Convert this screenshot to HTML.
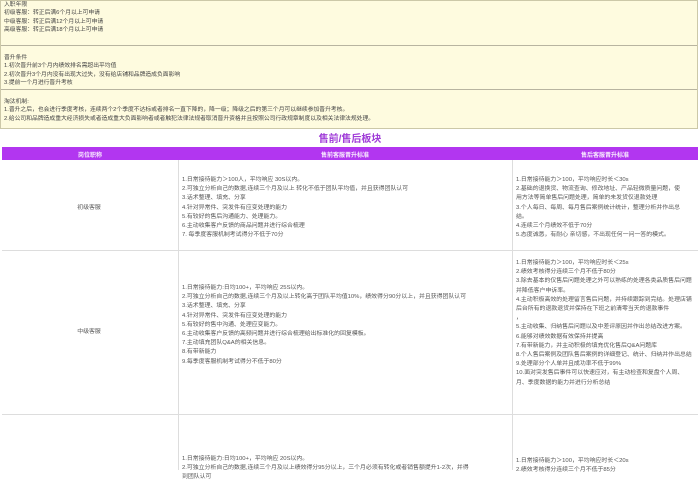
<!DOCTYPE html><html><head><meta charset="utf-8"><style>
body{margin:0;width:700px;height:470px;overflow:hidden;background:#fff;font-family:"Liberation Sans","Noto Sans CJK SC",sans-serif;color:#444;}
.box{position:absolute;left:0;top:0;width:696px;height:127px;background:#fefbdf;border:1px solid #ccc8a8;font-size:5.8px;line-height:8.4px;}
.sec{padding:0 3px;border-bottom:1px solid #b8b4a0;box-sizing:border-box;}
.t{position:absolute;top:130px;left:0;width:700px;text-align:center;color:#a03cd8;font-size:10px;font-weight:bold}
.hd{position:absolute;top:147px;left:2px;width:696px;height:13px;background:#b236f0;color:#f8e8ff;font-size:6px;font-weight:bold}
.hd div{position:absolute;top:3px;text-align:center}
.cell{position:absolute;font-size:5.9px;line-height:9.2px;color:#555}
.v{position:absolute;width:1px;background:#ddd}
.h{position:absolute;height:1px;background:#ddd;left:2px;width:696px}
</style></head><body>
<div class="box">
<div class="sec" style="height:45px">入职年限<br>初级客服：转正后满6个月以上可申请<br>中级客服：转正后满12个月以上可申请<br>高级客服：转正后满18个月以上可申请</div>
<div class="sec" style="height:44px;padding-top:8px">晋升条件<br>1.初次晋升前3个月内绩效排名需超出平均值<br>2.初次晋升3个月内没有出现大过失，没有给店铺和品牌造成负面影响<br>3.提前一个月进行晋升考核</div>
<div style="padding:8px 3px 0">淘汰机制:<br>1.晋升之后，也会进行季度考核，连续两个2个季度不达标或者排名一直下降的，降一级；降级之后的第三个月可以继续参加晋升考核。<br>2.给公司和品牌造成重大经济损失或者造成重大负面影响者或者触犯法律法规者取消晋升资格并且按照公司行政规章制度以及相关法律法规处理。</div>
</div>
<div class="t">售前/售后板块</div>
<div class="hd"><div style="left:0;width:176px">岗位职称</div><div style="left:176px;width:334px">售前客服晋升标准</div><div style="left:510px;width:186px">售后客服晋升标准</div></div>
<div class="v" style="left:178px;top:160px;height:310px"></div>
<div class="v" style="left:512px;top:160px;height:310px"></div>
<div class="h" style="top:250px"></div>
<div class="h" style="top:414px"></div>
<div class="cell" style="left:0;width:178px;top:204px;text-align:center">初级客服</div>
<div class="cell" style="left:182px;top:176px">1.日常接待能力＞100人，平均响应 30S以内。<br>2.可独立分析自己的数据,连续三个月及以上 转化不低于团队平均值，并且获得团队认可<br>3.话术整理、填充、分享<br>4.针对异常件、突发件有应变处理的能力<br>5.有较好的售后沟通能力、处理能力。<br>6.主动收集客户反馈的商品问题并进行综合梳理<br>7. 每季度客服机制考试得分不低于70分</div>
<div class="cell" style="left:516px;top:176px;width:168px">1.日常接待能力＞100，平均响应时长＜30s<br>2.基础的退换货、物流查询、修改地址、产品轻微质量问题，使用方法等简单售后问题处理，简单的未发货仅退款处理<br>3.个人每日、每周、每月售后案例统计统计，整理分析并作出总结。<br>4.连续三个月绩效不低于70分<br>5.态度诚恳，有耐心 亲切感，不出现任何一问一答的模式。</div>
<div class="cell" style="left:0;width:178px;top:328px;text-align:center">中级客服</div>
<div class="cell" style="left:182px;top:284px">1.日常接待能力:日均100+，平均响应 25S以内。<br>2.可独立分析自己的数据,连续三个月及以上转化高于团队平均值10%，绩效得分90分以上，并且获得团队认可<br>3.话术整理、填充、分享<br>4.针对异常件、突发件有应变处理的能力<br>5.有较好的售中沟通、处理应变能力。<br>6.主动收集客户反馈的高频问题并进行综合梳理给出标准化的回复模板。<br>7.主动填充团队Q&amp;A的相关信息。<br>8.有带新能力<br>9.每季度客服机制考试得分不低于80分</div>
<div class="cell" style="left:516px;top:259px;width:176px">1.日常接待能力＞100，平均响应时长＜25s<br>2.绩效考核得分连续三个月不低于80分<br>3.除去基本的仅售后问题处理之外可以熟练的处理各类品质售后问题并降低客户申诉率。<br>4.主动积极高效的处理留言售后问题，并持续跟踪到完结。处理店铺后台所有的退款退货并保持在下班之前清零当天的退款事件<br>，<br>5.主动收集、归纳售后问题以及中差评原因并作出总结改进方案。<br>6.能够对绩效数据有效保持并提高<br>7.有带新能力，并主动积极的填充优化售后Q&amp;A问题库<br>8.个人售后案例及团队售后案例的详细登记、统计、归纳并作出总结<br>9.处理部分个人单并且成功率不低于99%<br>10.面对突发售后事件可以快速应对，有主动检查和复盘个人周、月、季度数据的能力并进行分析总结</div>
<div class="cell" style="left:182px;top:455px">1.日常接待能力:日均100+，平均响应 20S以内。<br>2.可独立分析自己的数据,连续三个月及以上绩效得分95分以上，三个月必须有转化或者销售额提升1-2次，并得<br>到团队认可</div>
<div class="cell" style="left:516px;top:457px;width:178px">1.日常接待能力＞100，平均响应时长＜20s<br>2.绩效考核得分连续三个月不低于85分</div>
</body></html>
